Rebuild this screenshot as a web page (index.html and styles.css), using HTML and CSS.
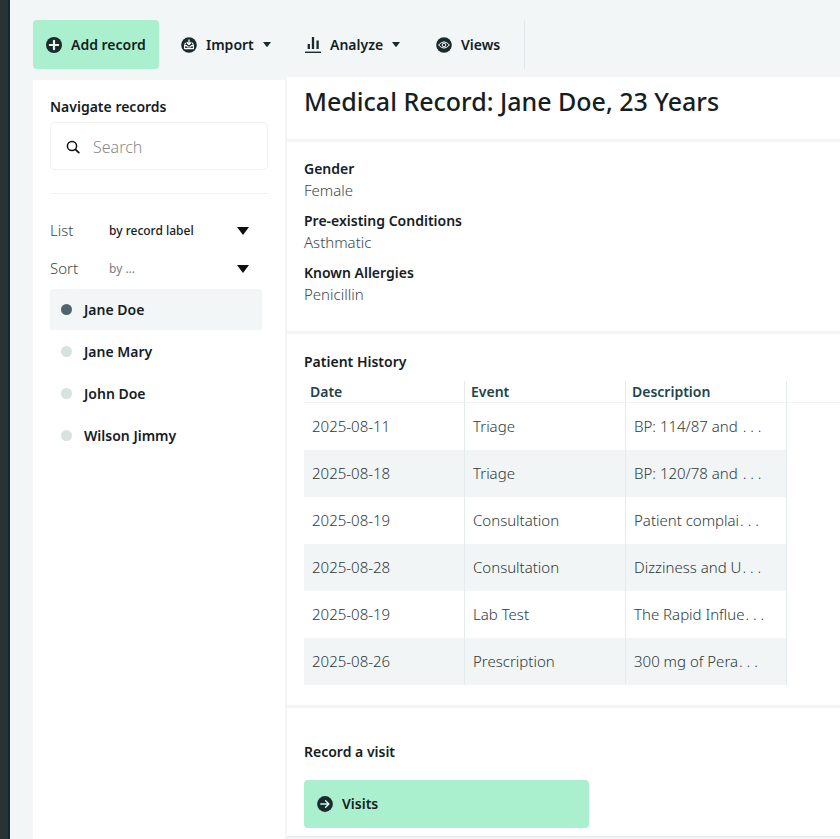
FILE: index.html
```
<!DOCTYPE html>
<html lang="en">
<head>
<meta charset="utf-8">
<meta name="viewport" content="width=device-width, initial-scale=1">
<title>Medical Record: Jane Doe</title>
<link rel="stylesheet" href="styles.css">
</head>
<body>
<div class="app">
  <div class="rail"></div>
  <div class="workspace">
    <div class="toolbar">
      <button class="tool tool-primary" type="button">
        <svg class="icon" viewBox="0 0 16 16" aria-hidden="true"><circle cx="8" cy="8" r="8" fill="#1b2a2c"/><path d="M8 3.8v8.4M3.8 8h8.4" stroke="#dff8ec" stroke-width="2.2" stroke-linecap="round"/></svg>
        <span>Add record</span>
      </button>
      <button class="tool tool-import" type="button" aria-haspopup="menu">
        <svg class="icon" viewBox="0 0 16 16" aria-hidden="true"><circle cx="8" cy="8" r="7.8" fill="#1b2a2c"/><path d="M8 2.4v4.8M5.7 5.2L8 7.5l2.3-2.3" fill="none" stroke="#fff" stroke-width="1.3"/><path d="M4.6 5.8L3.6 8.4v3.2h8.8V8.4l-1-2.6M3.6 8.6h2l.8 1.4h3.2l.8-1.4h2" fill="none" stroke="#fff" stroke-width="1.1" stroke-linejoin="round"/></svg>
        <span>Import</span>
        <svg class="caret" viewBox="0 0 8 5" aria-hidden="true"><path d="M0 0h8L4.6 4.6q-.6.6-1.2 0z" fill="#1b2a2c"/></svg>
      </button>
      <button class="tool tool-analyze" type="button" aria-haspopup="menu">
        <svg class="icon" viewBox="0 0 16 16" aria-hidden="true"><path d="M3.8 7v5M8 0v12M12.6 3.5V12" stroke="#1b2a2c" stroke-width="2.3"/><path d="M0 15.3h16" stroke="#1b2a2c" stroke-width="1.4"/></svg>
        <span>Analyze</span>
        <svg class="caret" viewBox="0 0 8 5" aria-hidden="true"><path d="M0 0h8L4.6 4.6q-.6.6-1.2 0z" fill="#1b2a2c"/></svg>
      </button>
      <button class="tool tool-views" type="button">
        <svg class="icon" viewBox="0 0 16 16" aria-hidden="true"><circle cx="8" cy="8" r="7.8" fill="#1b2a2c"/><path d="M2.6 8Q8 1.8 13.4 8Q8 14.2 2.6 8z" fill="none" stroke="#fff" stroke-width="1"/><circle cx="8" cy="8" r="1.8" fill="none" stroke="#fff" stroke-width="1"/></svg>
        <span>Views</span>
      </button>
    </div>
    <div class="columns">
      <aside class="sidebar">
        <label class="sidebar-title" for="search">Navigate records</label>
        <div class="search">
          <svg class="search-icon" viewBox="0 0 14 14" aria-hidden="true"><circle cx="6" cy="6" r="4.6" fill="none" stroke="#111" stroke-width="1.5"/><path d="M9.4 9.4l3.4 3.3" stroke="#111" stroke-width="1.7" stroke-linecap="round"/></svg>
          <input id="search" type="text" placeholder="Search">
        </div>
        <div class="filters">
          <div class="filter">
            <label for="list">List</label>
            <select id="list"><option>by record label</option></select>
          </div>
          <div class="filter">
            <label for="sort">Sort</label>
            <select id="sort" class="unset"><option>by ...</option></select>
          </div>
        </div>
        <nav class="records">
          <a class="record current" href="#jane-doe" aria-current="page">Jane Doe</a>
          <a class="record" href="#jane-mary">Jane Mary</a>
          <a class="record" href="#john-doe">John Doe</a>
          <a class="record" href="#wilson-jimmy">Wilson Jimmy</a>
        </nav>
      </aside>
      <main class="main">
        <header class="panel panel-title"><h1>Medical Record: Jane Doe, 23 Years</h1></header>
        <section class="panel panel-facts">
          <dl class="facts">
            <div><dt>Gender</dt><dd>Female</dd></div>
            <div><dt>Pre-existing Conditions</dt><dd>Asthmatic</dd></div>
            <div><dt>Known Allergies</dt><dd>Penicillin</dd></div>
          </dl>
        </section>
        <section class="panel panel-history">
          <h2 id="history">Patient History</h2>
          <table class="history" aria-labelledby="history">
            <thead>
              <tr><th scope="col">Date</th><th scope="col">Event</th><th scope="col">Description</th><td class="rest"></td></tr>
            </thead>
            <tbody>
              <tr><td>2025-08-11</td><td>Triage</td><td>BP: 114/87 and <span class="more">. . .</span></td></tr>
              <tr><td>2025-08-18</td><td>Triage</td><td>BP: 120/78 and <span class="more">. . .</span></td></tr>
              <tr><td>2025-08-19</td><td>Consultation</td><td>Patient complai<span class="more">. . .</span></td></tr>
              <tr><td>2025-08-28</td><td>Consultation</td><td>Dizziness and U<span class="more">. . .</span></td></tr>
              <tr><td>2025-08-19</td><td>Lab Test</td><td>The Rapid Influe<span class="more">. . .</span></td></tr>
              <tr><td>2025-08-26</td><td>Prescription</td><td>300 mg of Pera<span class="more">. . .</span></td></tr>
            </tbody>
          </table>
        </section>
        <section class="panel panel-visit">
          <h2>Record a visit</h2>
          <button class="visit" type="button">
            <svg class="icon" viewBox="0 0 16 16" aria-hidden="true"><circle cx="8" cy="8" r="7.9" fill="#1b2a2c"/><path d="M3.8 8h8M8.6 4.8L11.9 8l-3.3 3.2" fill="none" stroke="#d5f7e6" stroke-width="1.5" stroke-linecap="round" stroke-linejoin="round"/></svg>
            <span>Visits</span>
          </button>
        </section>
      </main>
    </div>
  </div>
</div>
</body>
</html>
```
FILE: styles.css
```
* { box-sizing: border-box; }

body {
  margin: 0;
  background: #f2f6f7;
  color: #14201f;
  font: 600 14px/22px "Noto Sans", "Open Sans", sans-serif;
}

button, input, select { font: inherit; color: inherit; }

h1, h2, dl, dd { margin: 0; }

.app { display: flex; min-height: 100vh; }

.rail {
  flex: none;
  width: 10px;
  background: #283333;
  border-right: 2px solid #0f2a2d;
}

.workspace {
  flex: 1;
  min-width: 0;
  display: flex;
  flex-direction: column;
  padding-left: 23px;
}

.toolbar {
  display: flex;
  align-self: flex-start;
  margin-top: 20px;
  border-right: 1px solid #e2e9eb;
}

.tool {
  display: flex;
  align-items: center;
  gap: 9px;
  height: 49px;
  padding: 0;
  border: 0;
  background: none;
}

.tool-primary {
  width: 126px;
  padding-left: 13px;
  margin-right: 22px;
  border-radius: 4px;
  background: #abf0ce;
}

.tool-import { width: 124px; }
.tool-analyze { width: 131px; }
.tool-views { width: 88px; }

.icon { flex: none; width: 16px; height: 16px; }
.caret { flex: none; width: 8px; height: 5px; }

.columns { flex: 1; display: flex; gap: 2px; margin-top: 8px; }

.sidebar {
  flex: none;
  width: 252px;
  margin-top: 3px;
  padding: 16px 17px;
  background: #fff;
}

.sidebar-title { display: block; }

.search {
  display: flex;
  align-items: center;
  gap: 13px;
  height: 48px;
  margin-top: 4px;
  padding: 2px 15px 0;
  border: 1px solid #eef1f2;
  border-radius: 5px;
}

.search-icon { flex: none; width: 14px; height: 14px; }

.search input {
  flex: 1;
  min-width: 0;
  padding: 0;
  border: 0;
  outline: 0;
  background: none;
  font-size: 16px;
  font-weight: 300;
}

.search input::placeholder { color: #858c8d; opacity: 1; }

.filters {
  margin-top: 23px;
  padding-top: 18px;
  border-top: 1px solid #eef1f2;
}

.filter { position: relative; display: flex; align-items: center; height: 38px; }

.filter label {
  width: 59px;
  padding-bottom: 2px;
  font-size: 15px;
  font-weight: 300;
  color: #3c4849;
}

.filter select {
  flex: 1;
  height: 30px;
  padding: 0;
  border: 0;
  appearance: none;
  background: none;
  font-size: 12px;
  font-weight: 500;
}

.filter select.unset { font-weight: 400; color: #767e7f; }

.filter::after {
  content: "";
  position: absolute;
  right: 19px;
  border: 6px solid transparent;
  border-top: 8px solid #0b0f0f;
  border-bottom: 0;
  pointer-events: none;
}

.records { display: grid; gap: 1px; margin-right: 6px; margin-top: 1px; }

.record {
  display: flex;
  align-items: center;
  gap: 12px;
  height: 41px;
  padding-left: 11px;
  border-radius: 3px;
  color: inherit;
  text-decoration: none;
}

.record::before {
  content: "";
  width: 11px;
  height: 11px;
  border-radius: 50%;
  background: #d6e3df;
}

.record.current { background: #f2f6f7; }
.record.current::before { background: #4f656b; }

.main {
  flex: 1;
  min-width: 0;
  display: grid;
  align-content: start;
  gap: 3px;
}

.panel { padding: 0 0 0 17px; background: #fff; }

.panel-title { height: 62px; padding-top: 8px; }

h1 { font-size: 25px; line-height: 32px; font-weight: 500; white-space: nowrap; }

h2 { font-size: 14px; line-height: 22px; font-weight: 600; }

.panel-facts { padding-top: 16px; padding-bottom: 25px; }

.facts { display: grid; gap: 8px; }
.facts dd {
  padding-bottom: 2px;
  font-size: 15px;
  line-height: 20px;
  font-weight: 300;
  color: #3c4849;
}

.panel-history { padding-top: 17px; padding-bottom: 20px; }

.history {
  width: 100%;
  margin-top: 8px;
  border-collapse: separate;
  border-spacing: 0;
  table-layout: fixed;
}

.history th {
  width: 161px;
  height: 22px;
  padding: 0 6px;
  border-right: 1px solid #e3ebec;
  text-align: left;
  line-height: 21px;
  font-weight: 600;
  color: #21434b;
}

.history .rest { padding: 0; }
.history thead th, .history .rest { border-bottom: 1px solid #f0f3f4; }

.history tbody td {
  height: 47px;
  padding: 0 8px 2px;
  border-right: 1px solid #e3ebec;
  font-size: 15px;
  font-weight: 300;
  color: #2e3a3b;
  white-space: nowrap;
}

.history tbody tr:nth-child(even) td { background: #f1f5f6; }

.more { margin-left: 1px; }

.panel-visit { padding-top: 33px; padding-bottom: 8px; border-bottom: 1px solid #e4e8e9; }

.visit {
  display: flex;
  align-items: center;
  gap: 9px;
  width: 285px;
  max-width: 100%;
  height: 48px;
  margin-top: 17px;
  padding: 0 13px;
  border: 0;
  border-radius: 4px;
  background: #abf0ce;
}
```
